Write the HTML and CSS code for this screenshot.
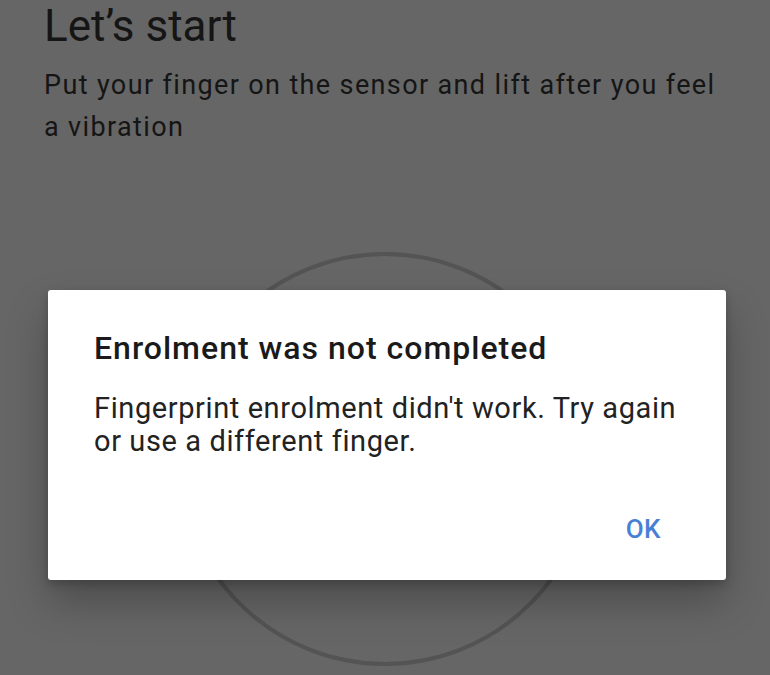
FILE: index.html
```html
<!DOCTYPE html>
<html lang="en">
<head>
    <meta charset="UTF-8">
    <title>Fingerprint setup</title>
    <meta name="viewport" content="width=device-width, initial-scale=1.0">
    <link rel="stylesheet" href="styles.css">
</head>
<body>

    <div class="screen">
        <h1 class="title">Let’s start</h1>
        <p class="lead">Put your finger on the sensor and lift after you feel a vibration</p>

        <div class="sensor"></div>
    </div>

    <div class="dialog">
        <h2 class="dialog-title">Enrolment was not completed</h2>
        <p class="dialog-text">Fingerprint enrolment didn't work. Try again or use a different finger.</p>
        <div class="dialog-actions">
            <button class="dialog-btn">OK</button>
        </div>
    </div>

</body>
</html>
```

FILE: styles.css
```css
html, body {
    margin: 0;
    height: 100%;
}

body {
    font-family: Roboto, "Noto Sans", sans-serif;
    background-color: #666;
    color: #151515;
    overflow: hidden;
    position: relative;
}

.screen {
    padding: 0 44px;
}

.title {
    margin: 0;
    font-size: 44px;
    font-weight: 400;
    line-height: 52px;
}

.lead {
    margin: 12px 0 0;
    font-size: 27px;
    letter-spacing: 1.37px;
    line-height: 42px;
    max-width: 680px;
}

.sensor {
    width: 406px;
    height: 406px;
    margin: 104px auto 0;
    border: 4px solid #545454;
    border-radius: 50%;
}

/* modal over the sensor screen */
.dialog {
    position: absolute;
    left: 48px;
    top: 290px;
    width: 678px;
    height: 290px;
    box-sizing: border-box;
    padding: 38px 30px 0 46px;
    background: #fff;
    border-radius: 3px;
    box-shadow: 0 22px 40px rgba(0, 0, 0, 0.25), 0 4px 10px rgba(0, 0, 0, 0.2);
}

.dialog-title {
    margin: 0;
    font-size: 32px;
    font-weight: 500;
    letter-spacing: 1px;
    line-height: 40px;
    color: #1a1a1a;
}

.dialog-text {
    margin: 24px 0 0;
    font-size: 29px;
    letter-spacing: 0.6px;
    line-height: 33px;
    color: #222;
}

.dialog-actions {
    display: flex;
    justify-content: flex-end;
    margin-top: 50px;
}

.dialog-btn {
    background: none;
    border: none;
    padding: 6px 35px 6px 20px;
    font-family: inherit;
    font-size: 26px;
    font-weight: 500;
    letter-spacing: 0.5px;
    line-height: 30px;
    color: #4a7fd6;
    cursor: pointer;
}
```
